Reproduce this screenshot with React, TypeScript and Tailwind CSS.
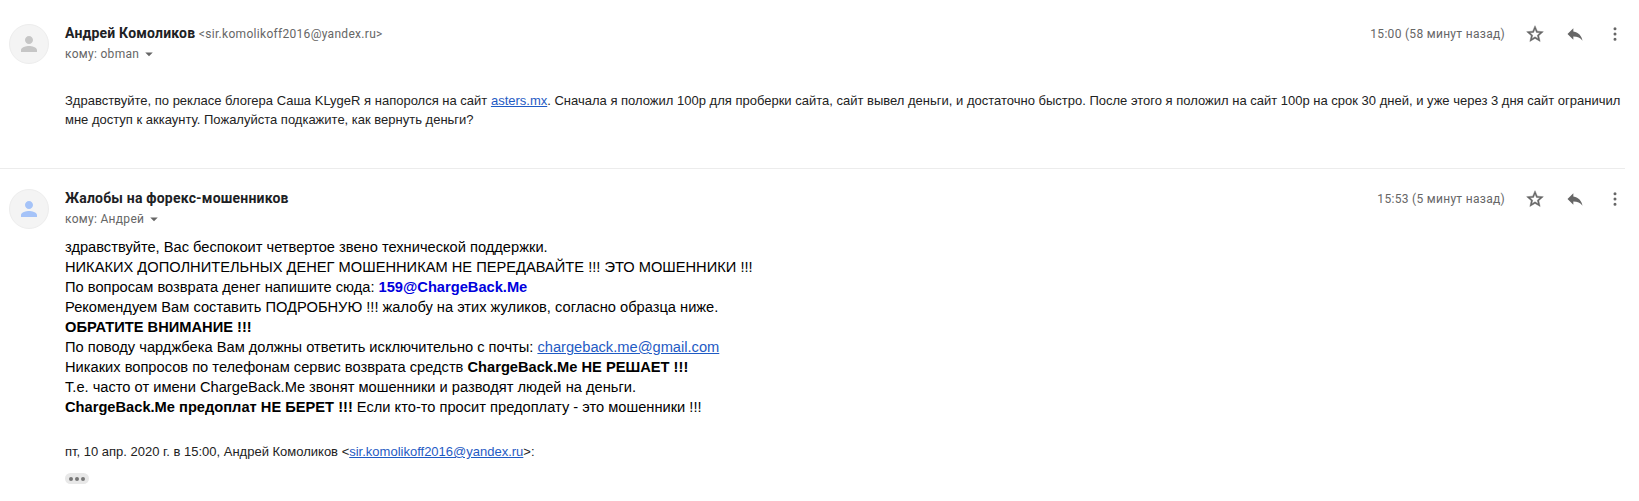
import type { ReactNode } from "react";

const iconPaths = {
  star: "M22 9.24l-7.19-.62L12 2 9.19 8.63 2 9.24l5.46 4.73L5.82 21 12 17.27 18.18 21l-1.63-7.03L22 9.24zM12 15.4l-3.76 2.27 1-4.28-3.32-2.88 4.38-.38L12 6.1l1.71 4.04 4.38.38-3.32 2.88 1 4.28L12 15.4z",
  reply: "M10 9V5l-7 7 7 7v-4.1c5 0 8.5 1.6 11 5.1-1-5-4-10-11-11z",
  more: "M12 3.8a1.8 1.8 0 100 3.6 1.8 1.8 0 000-3.6zm0 6.4a1.8 1.8 0 100 3.6 1.8 1.8 0 000-3.6zm0 6.4a1.8 1.8 0 100 3.6 1.8 1.8 0 000-3.6z",
  person: "M12 12c2.21 0 4-1.79 4-4s-1.79-4-4-4-4 1.79-4 4 1.79 4 4 4zm0 2c-2.67 0-8 1.34-8 4v2h16v-2c0-2.66-5.33-4-8-4z",
  caret: "M7 10l5 5 5-5z"
};

type IconProps = {
  name: keyof typeof iconPaths;
  className?: string;
};

function Icon({ name, className = "size-5" }: IconProps) {
  return (
    <svg viewBox="0 0 24 24" fill="currentColor" className={className} aria-hidden="true">
      <path d={iconPaths[name]} />
    </svg>
  );
}

type MessageProps = {
  avatarClass: string;
  children: ReactNode;
  className: string;
  email?: string;
  name: string;
  recipient: string;
  time: string;
};

function Message({ avatarClass, children, className, email, name, recipient, time }: MessageProps) {
  return (
    <article className={`flex w-[1625px] pl-[9px] ${className}`}>
      <div className="flex size-10 shrink-0 items-center justify-center rounded-full border border-[#ededed] bg-[#f4f4f4]">
        <Icon name="person" className={`size-6 ${avatarClass}`} />
      </div>
      <div className="ml-4 min-w-0 flex-1">
        <header className="flex justify-between font-[Roboto,sans-serif]">
          <div>
            <div className="flex h-5 items-center gap-[3.5px] whitespace-nowrap">
              <h3 className="pb-0.5 text-sm leading-[18px] font-bold tracking-[0.2px] text-[#202124]">{name}</h3>
              {email && <span className="text-xs leading-5 tracking-[0.3px] text-[#666]">&lt;{email}&gt;</span>}
            </div>
            <div className="flex h-5 items-center text-xs tracking-[0.3px] text-[#666]">
              кому: {recipient}
              <Icon name="caret" className="ml-px size-[18px]" />
            </div>
          </div>
          <div className="flex h-5 items-center gap-5 text-[#666]">
            <span className="text-xs tracking-[0.3px]">{time}</span>
            <Icon name="star" className="size-5 stroke-current stroke-[0.5]" />
            <Icon name="reply" />
            <Icon name="more" />
          </div>
        </header>
        {children}
      </div>
    </article>
  );
}

function MailLink({ children }: { children: ReactNode }) {
  return (
    <a href="#" className="text-[#1f5bc4] underline">
      {children}
    </a>
  );
}

export default function App() {
  return (
    <main className="h-[501px] w-[1639px] overflow-hidden bg-white font-['Liberation_Sans',Arial,sans-serif]">
      <Message
        className="h-[169px] border-b border-[#ececec] pt-6"
        avatarClass="text-[#c6c6c6]"
        name="Андрей Комоликов"
        email="sir.komolikoff2016@yandex.ru"
        recipient="obman"
        time="15:00 (58 минут назад)"
      >
        <div className="mt-[27px] text-[13px] leading-[19px] whitespace-nowrap text-[#222]">
          <p>
            Здравствуйте, по рекласе блогера Саша KLygeR я напоролся на сайт <MailLink>asters.mx</MailLink>. Сначала я
            положил 100р для проберки сайта, сайт вывел деньги, и достаточно быстро. После этого я положил на сайт 100р
            на срок 30 дней, и уже через 3 дня сайт ограничил
          </p>
          <p>мне доступ к аккаунту. Пожалуйста подкажите, как вернуть деньги?</p>
        </div>
      </Message>

      <Message
        className="pt-5"
        avatarClass="text-[#a5c3f8]"
        name="Жалобы на форекс-мошенников"
        recipient="Андрей"
        time="15:53 (5 минут назад)"
      >
        <div className="mt-2 text-[14.667px] leading-5 whitespace-nowrap text-black">
          <p>здравствуйте, Вас беспокоит четвертое звено технической поддержки.</p>
          <p>НИКАКИХ ДОПОЛНИТЕЛЬНЫХ ДЕНЕГ МОШЕННИКАМ НЕ ПЕРЕДАВАЙТЕ !!! ЭТО МОШЕННИКИ !!!</p>
          <p>
            По вопросам возврата денег напишите сюда: <b className="text-[#0000dd]">159@ChargeBack.Me</b>
          </p>
          <p>Рекомендуем Вам составить ПОДРОБНУЮ !!! жалобу на этих жуликов, согласно образца ниже.</p>
          <p>
            <b>ОБРАТИТЕ ВНИМАНИЕ !!!</b>
          </p>
          <p>
            По поводу чарджбека Вам должны ответить исключительно с почты: <MailLink>chargeback.me@gmail.com</MailLink>
          </p>
          <p>
            Никаких вопросов по телефонам сервис возврата средств <b>ChargeBack.Me НЕ РЕШАЕТ !!!</b>
          </p>
          <p>Т.е. часто от имени ChargeBack.Me звонят мошенники и разводят людей на деньги.</p>
          <p>
            <b>ChargeBack.Me предоплат НЕ БЕРЕТ !!!</b> Если кто-то просит предоплату - это мошенники !!!
          </p>
        </div>
        <p className="mt-[25px] text-[13px] leading-5 text-[#222]">
          пт, 10 апр. 2020 г. в 15:00, Андрей Комоликов &lt;<MailLink>sir.komolikoff2016@yandex.ru</MailLink>&gt;:
        </p>
        <button
          type="button"
          aria-label="Показать скрытый текст"
          className="mt-[11px] flex h-[11px] w-6 items-center justify-center gap-0.5 rounded-full bg-[#e8e8e8]"
        >
          <span className="size-1 rounded-full bg-[#777]" />
          <span className="size-1 rounded-full bg-[#777]" />
          <span className="size-1 rounded-full bg-[#777]" />
        </button>
      </Message>
    </main>
  );
}
